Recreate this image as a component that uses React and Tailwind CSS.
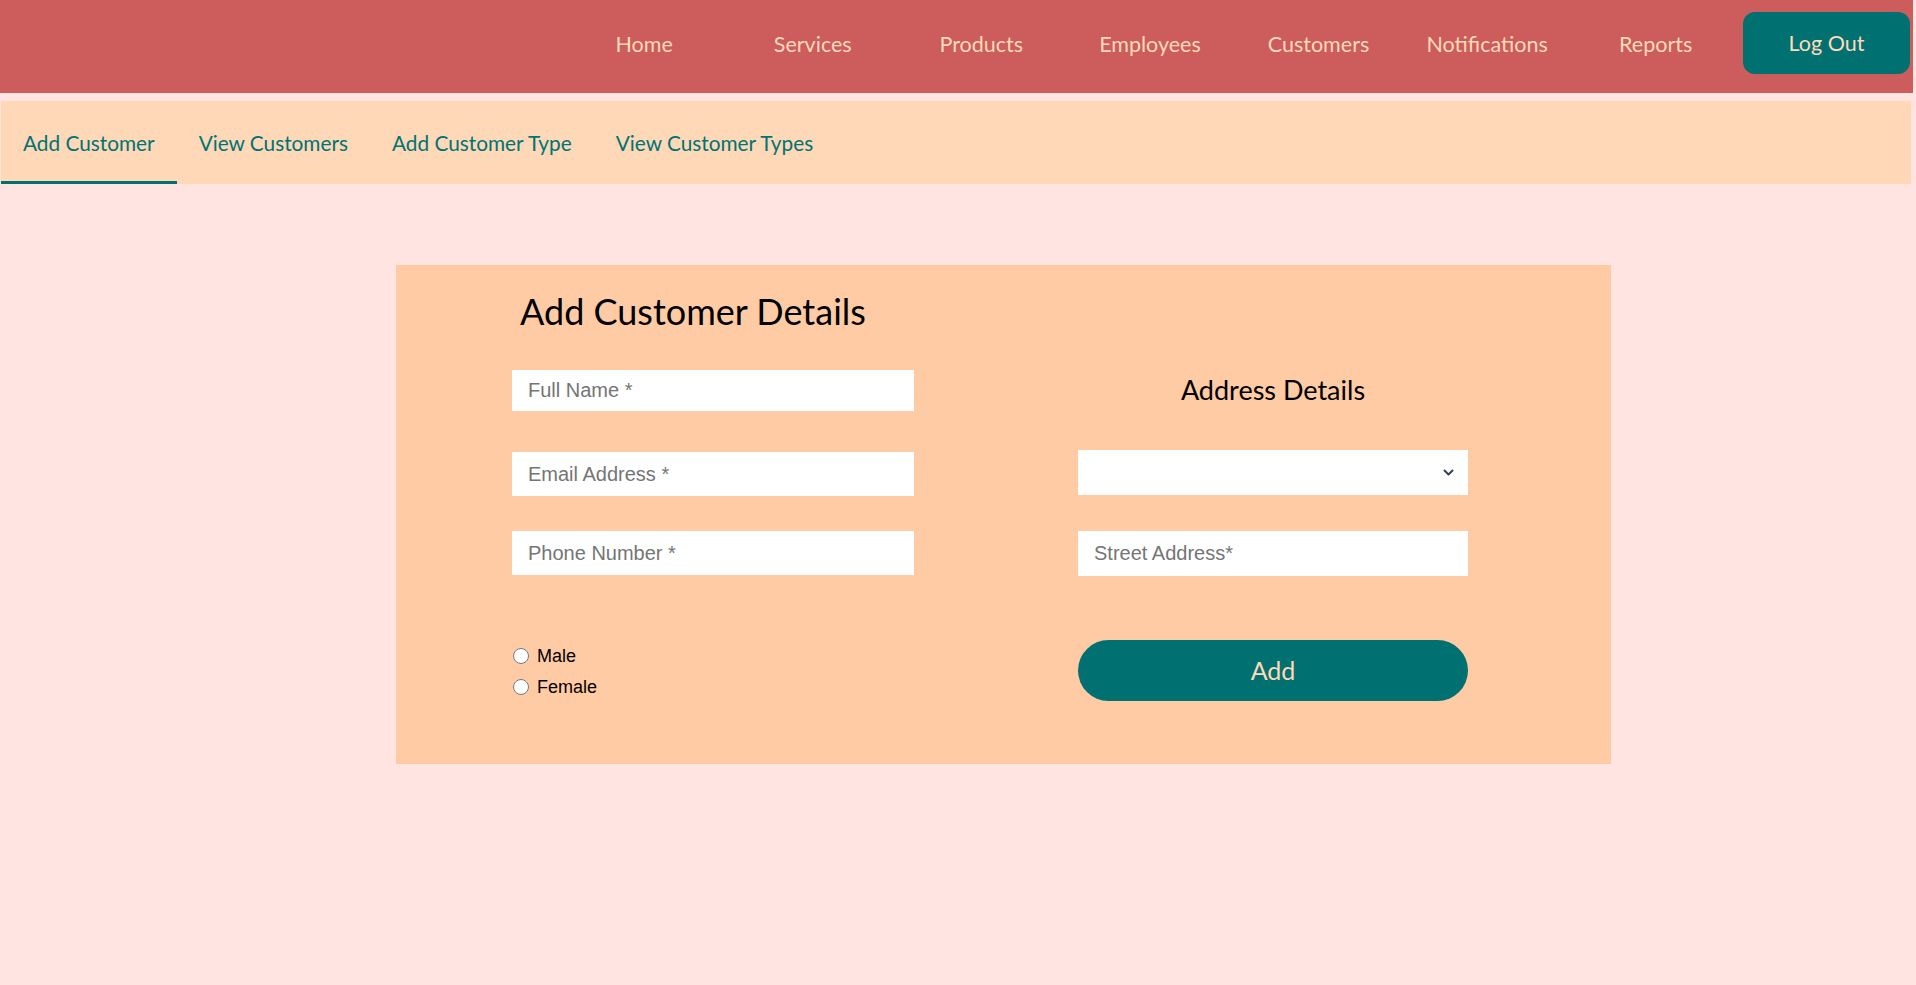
import React, { useState } from 'react';

const navItems = ['Home', 'Services', 'Products', 'Employees', 'Customers', 'Notifications', 'Reports'];
const tabs = ['Add Customer', 'View Customers', 'Add Customer Type', 'View Customer Types'];

const App = () => {
    const [activeTab, setActiveTab] = useState(0);
    const [gender, setGender] = useState('');

    const inputClass =
        "w-full bg-white px-[16px] text-[20px] text-gray-900 placeholder:text-[#757575] outline-none font-['Liberation_Sans',Arial,sans-serif]";

    return (
        <div className="min-h-[985px] w-full bg-[#FFE4E1] font-['Lato',sans-serif]">
            <div className="w-[1913px]">
                {/* Top Nav */}
                <header className="h-[93px] bg-[#CD5C5C] flex justify-end items-start pt-[12px] pr-[3px]">
                    {navItems.map(item => (
                        <a
                            key={item}
                            href="#"
                            className="w-[168.6px] h-[62px] pt-[2px] flex items-center justify-center text-[21.5px] text-[#FFDAB9]"
                        >
                            {item}
                        </a>
                    ))}
                    <button className="ml-[3px] w-[167px] h-[62px] rounded-[12px] bg-[#007070] text-[#FFDAB9] text-[21.5px]">
                        Log Out
                    </button>
                </header>

                {/* Sub tabs */}
                <nav className="mt-[8px] ml-[1px] w-[1910px] h-[83px] bg-[#FFD8B8] flex">
                    {tabs.map((tab, i) => (
                        <button
                            key={tab}
                            onClick={() => setActiveTab(i)}
                            className={`h-full px-[22px] flex items-center text-[20.8px] text-[#007373] border-b-[3px] pt-[3px] ${activeTab === i ? 'border-[#007070]' : 'border-transparent'}`}
                        >
                            {tab}
                        </button>
                    ))}
                </nav>

                {/* Form card */}
                <div className="mt-[81px] ml-[396px] w-[1215px] h-[499px] bg-[#FFCBA4] pt-[22px]">
                    <h2 className="ml-[124px] text-[36px] leading-[48px] text-black">Add Customer Details</h2>

                    <div className="flex mt-[35px] ml-[116px]">
                        {/* Left column */}
                        <div className="w-[402px] flex flex-col">
                            <input className={`${inputClass} h-[41px]`} placeholder="Full Name *" />
                            <input className={`${inputClass} h-[44px] mt-[41px]`} placeholder="Email Address *" />
                            <input className={`${inputClass} h-[44px] mt-[35px]`} placeholder="Phone Number *" />

                            <div className="mt-[73px] flex flex-col gap-[15px] font-['Liberation_Sans',Arial,sans-serif] text-[18px] text-black">
                                {['Male', 'Female'].map(g => (
                                    <label key={g} className="flex items-center gap-[8px] h-[16px] leading-none">
                                        <input
                                            type="radio"
                                            name="gender"
                                            checked={gender === g}
                                            onChange={() => setGender(g)}
                                            className="m-0 ml-[1px] w-[16px] h-[16px]"
                                        />
                                        {g}
                                    </label>
                                ))}
                            </div>
                        </div>

                        {/* Right column */}
                        <div className="w-[390px] ml-[164px] flex flex-col">
                            <h3 className="h-[41px] flex items-center justify-center text-[27px] text-black">
                                Address Details
                            </h3>
                            <div className="relative mt-[39px] h-[45px] bg-white">
                                <select className="w-full h-full appearance-none bg-white px-[16px] outline-none text-[19px]">
                                    <option value=""></option>
                                </select>
                                <svg
                                    className="absolute right-[14px] top-[19px] pointer-events-none"
                                    width="11"
                                    height="7"
                                    viewBox="0 0 11 7"
                                    fill="none"
                                >
                                    <path d="M1.5 1.5L5.5 5.5L9.5 1.5" stroke="#374151" strokeWidth="2" strokeLinecap="round" strokeLinejoin="round" />
                                </svg>
                            </div>
                            <input className={`${inputClass} h-[45px] mt-[36px]`} placeholder="Street Address*" />
                            <button className="mt-[64px] h-[61px] rounded-full bg-[#007070] text-[#FFDAB9] text-[25px]">
                                Add
                            </button>
                        </div>
                    </div>
                </div>
            </div>
        </div>
    );
};

export default App;
